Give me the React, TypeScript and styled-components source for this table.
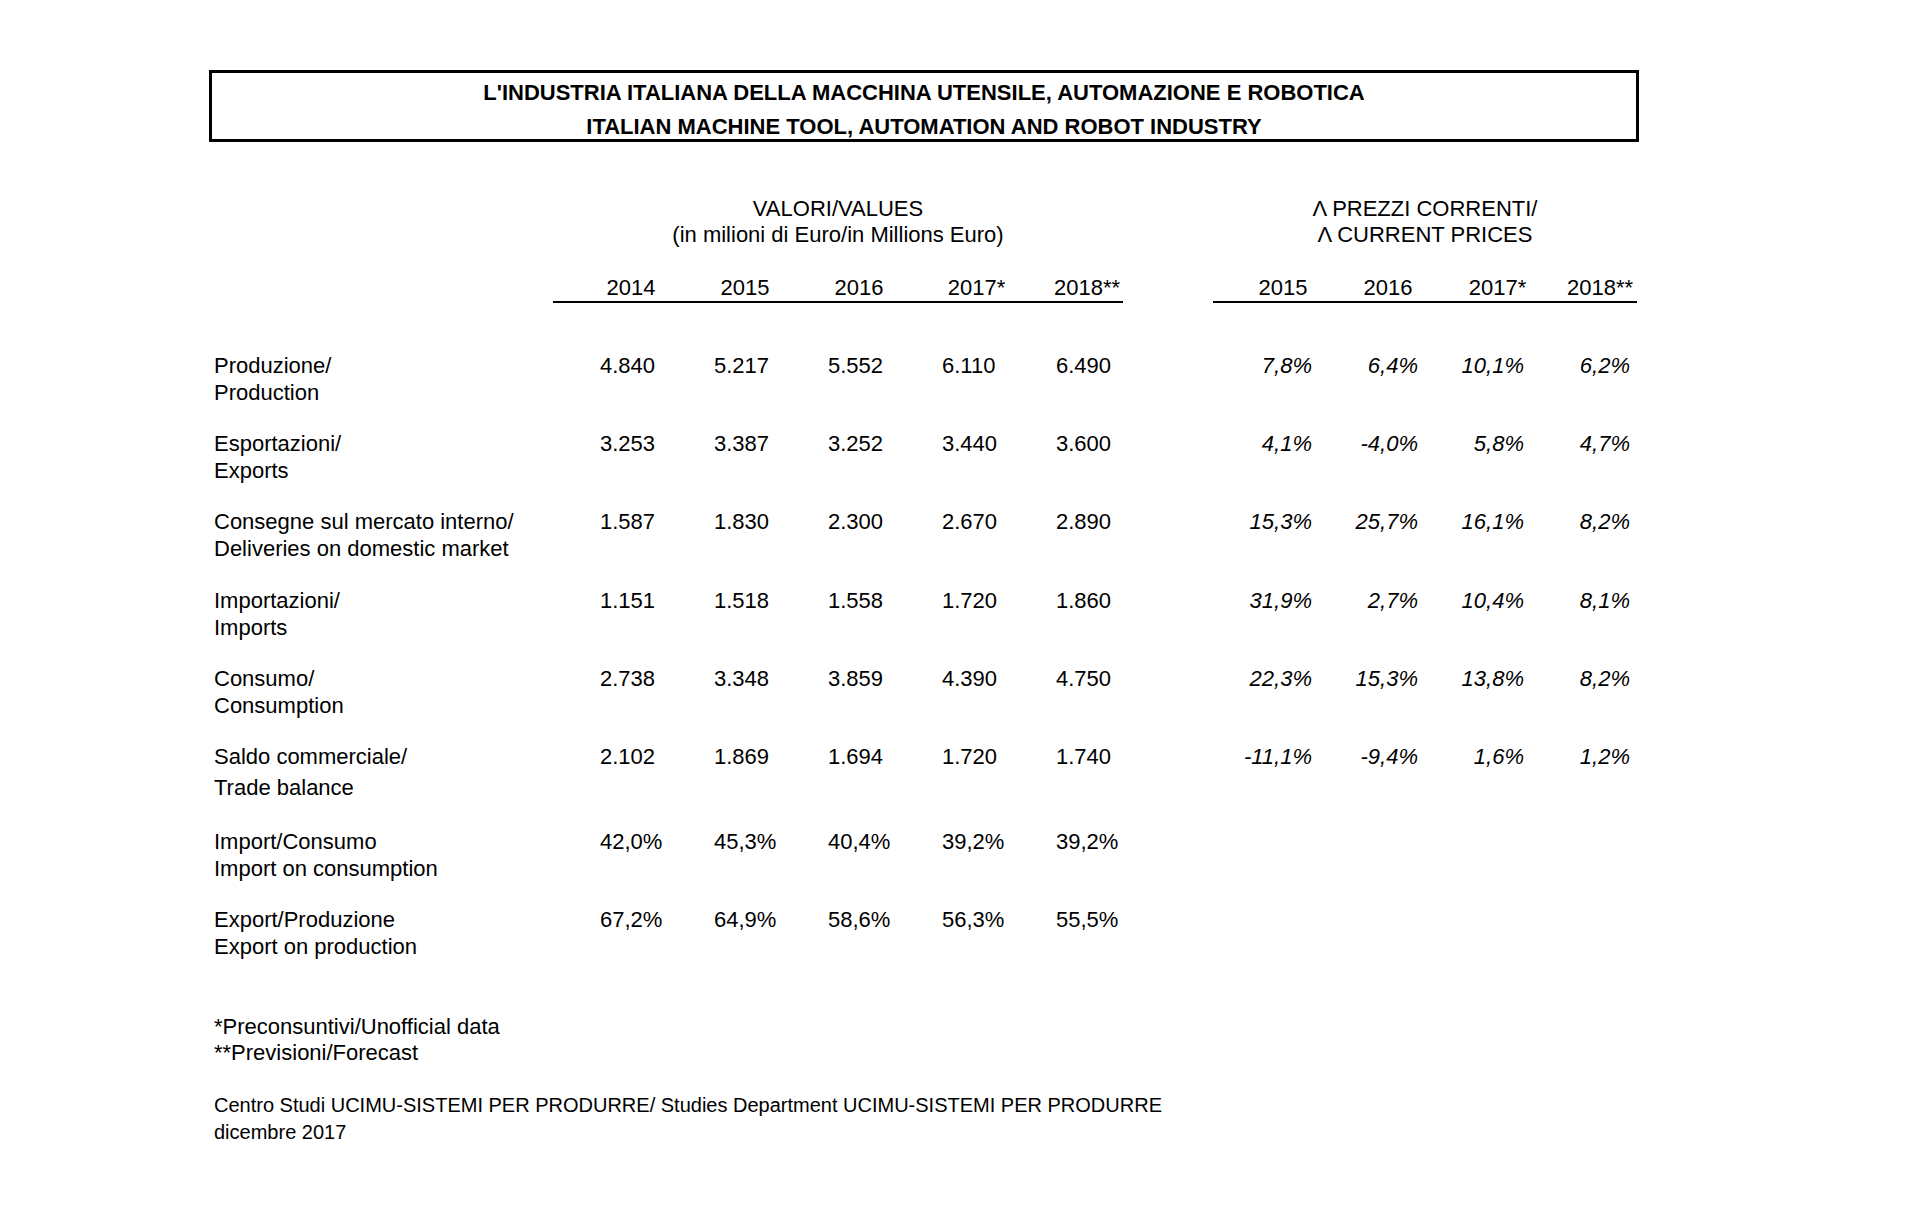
import React from "react";
import styled, { createGlobalStyle } from "styled-components";

const GlobalStyle = createGlobalStyle`
  html, body {
    margin: 0;
    padding: 0;
    background: #ffffff;
  }
  body {
    font-family: "Liberation Sans", Arial, Helvetica, sans-serif;
    color: #000;
  }
`;

// label | 5 value columns | gap | 4 change columns
const COLUMNS = "344px repeat(5, 114px) 90px repeat(4, 106px)";

const Page = styled.div`
  width: 1430px;
  padding: 70px 0 60px 209px;
  font-size: 22px;
`;

const TitleBox = styled.div`
  box-sizing: border-box;
  height: 72px;
  border: 3px solid #000;
  padding-top: 3px;
  text-align: center;
  font-weight: bold;
  line-height: 34px;
`;

const Grid = styled.div`
  display: grid;
  grid-template-columns: ${COLUMNS};
`;

const GroupRow = styled(Grid)`
  margin-top: 54px;
  line-height: 26px;
`;

const GroupTitle = styled.div<{ $col: string }>`
  grid-column: ${(p) => p.$col};
  text-align: center;
`;

const YearRow = styled(Grid)`
  margin-top: 25.5px;
  line-height: 27px;
`;

const YearCell = styled.div<{ $shift: number }>`
  text-align: center;
  padding-left: ${(p) => p.$shift}px;
  border-bottom: 2px solid #000;
`;

const Blank = styled.div``;

const Body = styled.div`
  margin-top: 49px;
  display: flex;
  flex-direction: column;
  gap: 24.4px;
`;

const DataRow = styled(Grid)<{ $extra?: boolean }>`
  line-height: 27px;
  padding-bottom: ${(p) => (p.$extra ? 2 : 0)}px;
`;

const Label = styled.div`
  padding-left: 5px;
  white-space: nowrap;
`;

const LabelLine = styled.div<{ $gap?: boolean }>`
  margin-top: ${(p) => (p.$gap ? 4 : 0)}px;
`;

const Value = styled.div`
  padding-left: 47px;
`;

const Change = styled.div`
  text-align: right;
  padding-right: 7px;
  font-style: italic;
`;

const Notes = styled.div`
  margin-top: 53.5px;
  padding-left: 5px;
  line-height: 26px;
`;

const Source = styled.div`
  margin-top: 26px;
  padding-left: 5px;
  font-size: 20px;
  line-height: 27px;
`;

interface RowData {
  it: string;
  en: string;
  values: string[];
  changes?: string[];
  extra?: boolean;
}

const rows: RowData[] = [
  { it: "Produzione/", en: "Production", values: ["4.840", "5.217", "5.552", "6.110", "6.490"], changes: ["7,8%", "6,4%", "10,1%", "6,2%"] },
  { it: "Esportazioni/", en: "Exports", values: ["3.253", "3.387", "3.252", "3.440", "3.600"], changes: ["4,1%", "-4,0%", "5,8%", "4,7%"] },
  { it: "Consegne sul mercato interno/", en: "Deliveries on domestic market", values: ["1.587", "1.830", "2.300", "2.670", "2.890"], changes: ["15,3%", "25,7%", "16,1%", "8,2%"] },
  { it: "Importazioni/", en: "Imports", values: ["1.151", "1.518", "1.558", "1.720", "1.860"], changes: ["31,9%", "2,7%", "10,4%", "8,1%"] },
  { it: "Consumo/", en: "Consumption", values: ["2.738", "3.348", "3.859", "4.390", "4.750"], changes: ["22,3%", "15,3%", "13,8%", "8,2%"] },
  { it: "Saldo commerciale/", en: "Trade balance", values: ["2.102", "1.869", "1.694", "1.720", "1.740"], changes: ["-11,1%", "-9,4%", "1,6%", "1,2%"], extra: true },
  { it: "Import/Consumo", en: "Import on consumption", values: ["42,0%", "45,3%", "40,4%", "39,2%", "39,2%"] },
  { it: "Export/Produzione", en: "Export on production", values: ["67,2%", "64,9%", "58,6%", "56,3%", "55,5%"] },
];

const valueYears = [
  { label: "2014", shift: 42 },
  { label: "2015", shift: 42 },
  { label: "2016", shift: 42 },
  { label: "2017*", shift: 49 },
  { label: "2018**", shift: 42 },
];
const changeYears = [
  { label: "2015", shift: 34 },
  { label: "2016", shift: 32 },
  { label: "2017*", shift: 39 },
  { label: "2018**", shift: 32 },
];

export default function App() {
  return (
    <Page>
      <GlobalStyle />
      <TitleBox>
        <div>L'INDUSTRIA ITALIANA DELLA MACCHINA UTENSILE, AUTOMAZIONE E ROBOTICA</div>
        <div>ITALIAN MACHINE TOOL, AUTOMATION AND ROBOT INDUSTRY</div>
      </TitleBox>

      <GroupRow>
        <GroupTitle $col="2 / 7">
          VALORI/VALUES
          <br />
          (in milioni di Euro/in Millions Euro)
        </GroupTitle>
        <GroupTitle $col="8 / 12">
          Λ PREZZI CORRENTI/
          <br />Λ CURRENT PRICES
        </GroupTitle>
      </GroupRow>

      <YearRow>
        <Blank />
        {valueYears.map((y) => (
          <YearCell key={"v" + y.label} $shift={y.shift}>
            {y.label}
          </YearCell>
        ))}
        <Blank />
        {changeYears.map((y) => (
          <YearCell key={"c" + y.label} $shift={y.shift}>
            {y.label}
          </YearCell>
        ))}
      </YearRow>

      <Body>
        {rows.map((r) => (
          <DataRow key={r.it} $extra={r.extra}>
            <Label>
              <LabelLine>{r.it}</LabelLine>
              <LabelLine $gap={r.extra}>{r.en}</LabelLine>
            </Label>
            {r.values.map((v, i) => (
              <Value key={i}>{v}</Value>
            ))}
            <Blank />
            {r.changes?.map((c, i) => (
              <Change key={i}>{c}</Change>
            ))}
          </DataRow>
        ))}
      </Body>

      <Notes>
        <div>*Preconsuntivi/Unofficial data</div>
        <div>**Previsioni/Forecast</div>
      </Notes>

      <Source>
        <div>Centro Studi UCIMU-SISTEMI PER PRODURRE/ Studies Department UCIMU-SISTEMI PER PRODURRE</div>
        <div>dicembre 2017</div>
      </Source>
    </Page>
  );
}
